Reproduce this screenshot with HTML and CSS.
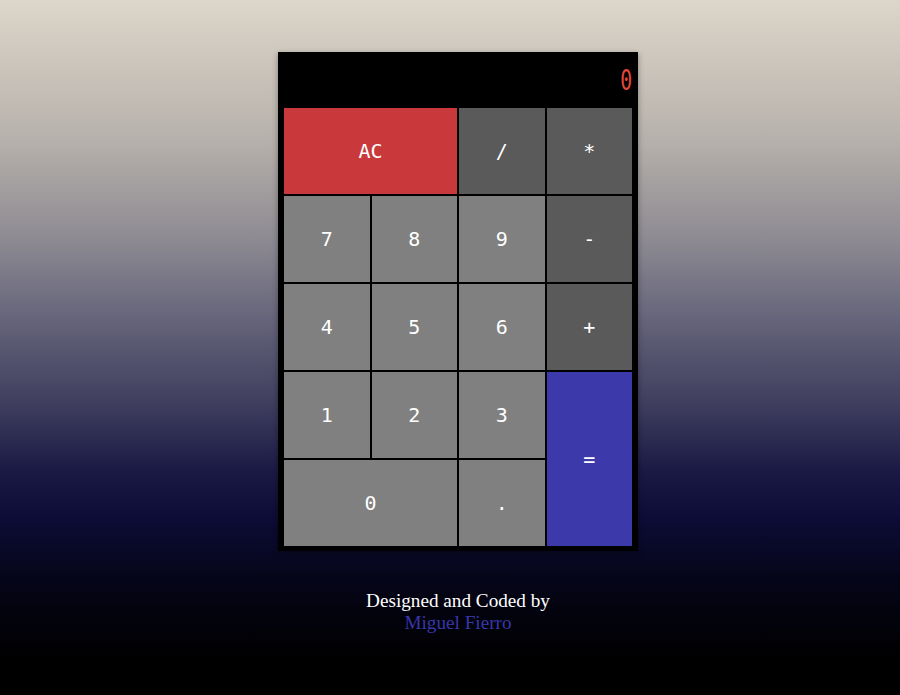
FILE: index.html
```html
<!DOCTYPE html>
<html lang="en">
<head>
<meta charset="utf-8">
<title>Calculator</title>
<link rel="stylesheet" href="styles.css">
</head>
<body>
<main class="page">
  <div class="calculator">
    <div class="display"><span class="display-value">0</span></div>
    <div class="keys">
      <button class="key key-clear key-wide">AC</button>
      <button class="key key-op">/</button>
      <button class="key key-op">*</button>
      <button class="key">7</button>
      <button class="key">8</button>
      <button class="key">9</button>
      <button class="key key-op">-</button>
      <button class="key">4</button>
      <button class="key">5</button>
      <button class="key">6</button>
      <button class="key key-op">+</button>
      <button class="key">1</button>
      <button class="key">2</button>
      <button class="key">3</button>
      <button class="key key-equals">=</button>
      <button class="key key-wide">0</button>
      <button class="key">.</button>
    </div>
  </div>
  <footer class="credit">
    <div>Designed and Coded by</div>
    <div class="author">Miguel Fierro</div>
  </footer>
</main>
</body>
</html>
```

FILE: styles.css
```css
html, body {
  margin: 0;
  padding: 0;
}

body {
  min-height: 695px;
  background: linear-gradient(to bottom,
    #ddd6ca 0px,
    #b6b1ab 140px,
    #8d8a92 240px,
    #65647a 320px,
    #3c3b5c 410px,
    #1a1a45 470px,
    #0c0c36 520px,
    #050518 580px,
    #000000 660px);
  background-repeat: no-repeat;
  background-color: #000;
}

.page {
  display: flex;
  flex-direction: column;
  align-items: center;
  padding-top: 52px;
  padding-left: 16px;
}

.calculator {
  width: 360px;
  box-sizing: border-box;
  background: #000;
  padding: 0 6px 5px 6px;
  box-shadow: 0 2px 6px rgba(0, 0, 0, 0.35);
}

.display {
  height: 56px;
  display: flex;
  align-items: center;
  justify-content: flex-end;
}

.display-value {
  color: #e5473e;
  font-family: "DejaVu Sans Mono", monospace;
  font-size: 22px;
  font-weight: 200;
  line-height: 1;
  display: inline-block;
  transform: scale(0.9, 1.3);
  transform-origin: right center;
  margin-top: 2px;
}

.keys {
  display: grid;
  grid-template-columns: repeat(4, 85.5px);
  grid-auto-rows: 86px;
  gap: 2px;
}

.key {
  border: 0;
  margin: 0;
  padding: 0;
  background: #808080;
  color: #fff;
  font-family: "DejaVu Sans Mono", monospace;
  font-size: 20px;
  display: flex;
  align-items: center;
  justify-content: center;
  cursor: pointer;
}

.key-wide {
  grid-column: span 2;
}

.key-op {
  background: #5a5a5a;
}

.key-clear {
  background: #c9393b;
}

.key-equals {
  background: #3c39ab;
  grid-column: 4;
  grid-row: 4 / span 2;
}

.credit {
  margin-top: 39px;
  text-align: center;
  font-family: "Liberation Serif", "Times New Roman", serif;
  font-size: 19.2px;
  line-height: 22px;
  color: #ffffff;
}

.author {
  color: #3936a8;
}
```
